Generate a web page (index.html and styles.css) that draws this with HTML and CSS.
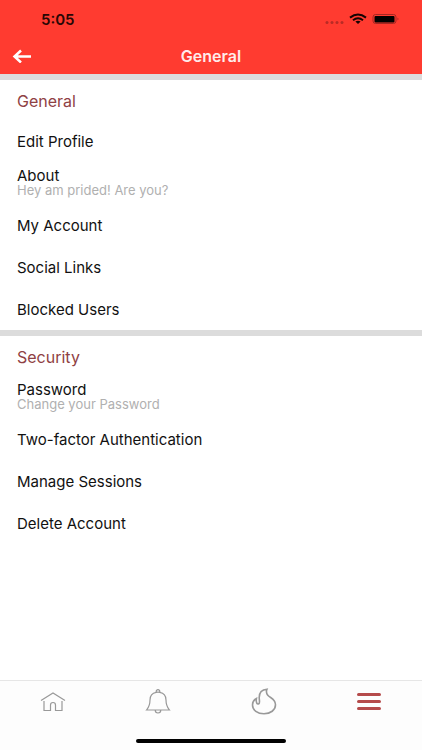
FILE: index.html
```html
<!DOCTYPE html>
<html lang="en">
<head>
<meta charset="utf-8">
<meta name="viewport" content="width=device-width, initial-scale=1">
<title>General</title>
<link rel="stylesheet" href="styles.css">
</head>
<body>
<header class="header">
  <div class="status">
    <span class="time">5:05</span>
    <svg class="status-icons" width="76" height="14" viewBox="0 0 76 14" aria-hidden="true">
      <g fill="#b92b25"><circle cx="3" cy="10.5" r="1.5"/><circle cx="8" cy="10.5" r="1.5"/><circle cx="13" cy="10.5" r="1.5"/><circle cx="18" cy="10.5" r="1.5"/></g>
      <g fill="none" stroke="#160303" stroke-width="2"><path d="M26 5.6Q34 -.6 42 5.6"/><path d="M29 8.2Q34 4.2 39 8.2"/></g>
      <path d="M31.4 9.6Q34 7.8 36.600 9.600L34 12Z" fill="#160303"/>
      <rect x="49" y="2.500" width="23" height="9" rx="2.500" fill="none" stroke="#a52722"/>
      <rect x="50.500" y="4" width="20" height="6.500" rx="1" fill="#000"/>
      <path d="M73.500 5.500Q75.500 7 73.500 8.500Z" fill="#a52722"/>
    </svg>
  </div>
  <div class="navbar">
    <button class="back" type="button" aria-label="Back">
      <svg width="20" height="14" viewBox="0 0 20 14" aria-hidden="true"><path d="M19 7.500H2.500M9 1.500L2.500 7.500L9 13.500" fill="none" stroke="#fff" stroke-width="2.500"/></svg>
    </button>
    <h1 class="title">General</h1>
  </div>
</header>
<main class="content">
  <section class="section">
    <h2 class="heading">General</h2>
    <a class="item" href="#profile">Edit Profile</a>
    <a class="item" href="#about">About<span class="note">Hey am prided! Are you?</span></a>
    <a class="item" href="#account">My Account</a>
    <a class="item" href="#links">Social Links</a>
    <a class="item" href="#blocked">Blocked Users</a>
  </section>
  <section class="section">
    <h2 class="heading">Security</h2>
    <a class="item" href="#password">Password<span class="note">Change your Password</span></a>
    <a class="item" href="#two-factor">Two-factor Authentication</a>
    <a class="item" href="#sessions">Manage Sessions</a>
    <a class="item" href="#delete">Delete Account</a>
  </section>
</main>
<footer class="footer">
  <nav class="tabs">
    <a class="tab" href="#home" aria-label="Home">
      <svg width="26" height="28" viewBox="0 0 26 28" aria-hidden="true"><path d="M1 12.500L13 5L25 12.500M4 13V22.500H10.500V17Q10.500 14.500 13 14.500T15.500 17V22.500H22V13"/></svg>
    </a>
    <a class="tab" href="#notifications" aria-label="Notifications">
      <svg width="26" height="28" viewBox="0 0 26 28" aria-hidden="true"><path d="M11.200 4.300C10.500 .8 15.500 .8 14.800 4.300C19 5 21 8 21 12C21 18 22.500 19.500 24.500 22H1.500C3.500 19.500 5 18 5 12C5 8 7 5 11.200 4.300ZM11.200 4.300Q13 3.800 14.800 4.300M10.200 22C10.200 26 15.800 26 15.800 22"/></svg>
    </a>
    <a class="tab" href="#trending" aria-label="Trending">
      <svg width="26" height="28" viewBox="0 0 26 28" aria-hidden="true"><path class="flame" d="M16 1.200C11 1.500 8.200 4.500 8.200 9.500C8.200 12 9.200 14.800 7.800 15.800C6 16.800 4.800 14 5.400 10.500C2.800 11.800 1.500 14.200 1.500 17C1.500 22 6.500 25.800 13 25.800S24.500 22 24.500 16.800C24.500 10.500 19 10 16.800 7.200C15.200 5.200 15.200 3 16 1.200Z"/></svg>
    </a>
    <a class="tab" href="#menu" aria-label="Menu" aria-current="page">
      <svg width="26" height="28" viewBox="0 0 26 28" aria-hidden="true"><path class="bars" d="M2.500 6.500H23.500M2.500 13.500H23.500M2.500 20.500H23.500"/></svg>
    </a>
  </nav>
  <div class="home-bar"></div>
</footer>
</body>
</html>
```
FILE: styles.css
```css
* {
  box-sizing: border-box;
}

body {
  display: flex;
  flex-direction: column;
  min-height: 100vh;
  margin: 0;
  background: #fff;
  color: #111;
  font-family: Inter, "Liberation Sans", sans-serif;
  font-size: 15px;
  line-height: 15px;
}

.header {
  background: #ff3b30;
}

.status {
  display: flex;
  align-items: center;
  justify-content: space-between;
  height: 38px;
  padding: 0 22px 0 41px;
}

.time {
  color: #2a0705;
  font-weight: 600;
}

.navbar {
  display: grid;
  grid-template-columns: 44px 1fr 44px;
  align-items: center;
  height: 36px;
}

.back {
  display: flex;
  align-items: center;
  height: 36px;
  padding: 0 12px;
  border: 0;
  background: none;
}

.title {
  margin: 0;
  color: #ffeceb;
  font-size: 16px;
  font-weight: 600;
  text-align: center;
}

.content {
  flex: 1;
}

.section {
  border-top: 6px solid #dcdcdc;
}

.heading {
  display: flex;
  align-items: center;
  height: 40px;
  margin: 0;
  padding: 2px 17px 0;
  color: #8f4144;
  font-size: 16px;
  font-weight: 400;
}

.item {
  display: flex;
  flex-direction: column;
  justify-content: center;
  height: 42px;
  padding: 0 17px;
  color: #111;
  text-decoration: none;
}

.note {
  color: #b0b0b0;
  font-size: 13px;
}

.footer {
  display: flex;
  flex-direction: column;
  align-items: center;
  height: 70px;
  border-top: 1px solid #e6e6e6;
  background: #fdfdfd;
}

.tabs {
  display: grid;
  grid-template-columns: repeat(4, 1fr);
  width: 100%;
  height: 58px;
  padding-top: 7px;
}

.tab {
  text-align: center;
}

.tab svg {
  fill: none;
  stroke: #999;
  stroke-width: 1.2;
}

.tab .flame {
  stroke-width: 1.6;
}

.tab .bars {
  stroke: #b54b4b;
  stroke-width: 3;
  stroke-linecap: round;
}

.home-bar {
  width: 150px;
  height: 4px;
  border-radius: 2px;
  background: #000;
}
```
